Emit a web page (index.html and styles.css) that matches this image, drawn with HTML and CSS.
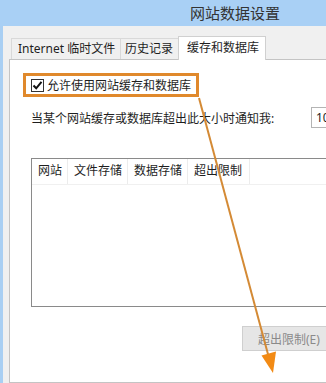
FILE: index.html
```html
<!DOCTYPE html>
<html lang="zh-CN">
<head>
  <meta charset="UTF-8" />
  <meta name="viewport" content="width=device-width, initial-scale=1.0"/>
  <title>网站数据设置</title>
  <link rel="stylesheet" href="styles.css">
</head>
<body>
  <div class="window">
    <div class="titlebar">网站数据设置</div>
    <div class="content">
      <div class="tabs">
        <div class="tab">Internet 临时文件</div>
        <div class="tab">历史记录</div>
        <div class="tab active">缓存和数据库</div>
      </div>
      <div class="panel">
        <label class="highlight">
          <span class="check">
            <svg width="11" height="11" viewBox="0 0 11 11"><path d="M1.5 5.5 L4.2 8.3 L9.5 1.8" fill="none" stroke="#111" stroke-width="2"/></svg>
          </span>
          <span>允许使用网站缓存和数据库</span>
        </label>
        <div class="limit-row">
          <span class="limit-label">当某个网站缓存或数据库超出此大小时通知我:</span>
          <div class="size-input">10</div>
        </div>
        <div class="list">
          <div class="list-head">
            <div class="col col-site">网站</div>
            <div class="col col-file">文件存储</div>
            <div class="col col-data">数据存储</div>
            <div class="col col-over">超出限制</div>
          </div>
        </div>
        <div class="btn-row">
          <button class="btn" disabled>超出限制(E)</button>
        </div>
      </div>
    </div>
  </div>

  <!-- annotation arrow drawn over the dialog -->
  <svg class="arrow" width="326" height="383" viewBox="0 0 326 383">
    <line x1="199" y1="98" x2="269" y2="358" stroke="#d48a35" stroke-width="2"/>
    <polygon points="261.5,355.5 276,351.5 273,373" fill="#f28a14"/>
  </svg>
</body>
</html>
```

FILE: styles.css
```css
body {
  margin: 0;
  width: 326px;
  height: 383px;
  overflow: hidden;
  position: relative;
  font-family: "Noto Sans", "Noto Sans CJK SC", sans-serif;
  font-size: 12px;
  color: #1e1e1e;
  background: #f0f0f0;
  white-space: nowrap;
}
.window {
  height: 383px;
  border-left: 3px solid #a9cff3;
  box-sizing: border-box;
}
.titlebar {
  height: 26px;
  margin-left: -3px;
  padding-left: 190px;
  background: #a9d0f5;
  color: #333;
  font-size: 15px;
  line-height: 26px;
}
.content {
  padding-left: 6px;
  padding-top: 9px;
}
.tabs {
  display: flex;
  align-items: flex-end;
  padding-left: 2px;
  height: 24px;
}
.tab {
  height: 21px;
  line-height: 20px;
  padding: 0 0 0 5px;
  border: 1px solid #d9d9d9;
  border-bottom: none;
  margin-right: -1px;
  background: #f0f0f0;
  box-sizing: border-box;
  overflow: hidden;
}
.tab:first-child { width: 110px; padding-left: 6px; }
.tab:nth-child(2) { width: 59px; padding-left: 4px; }
.tab.active {
  width: 88px;
  height: 24px;
  line-height: 21px;
  padding-left: 8px;
  background: #fff;
  border-color: #d0d0d0;
  position: relative;
  z-index: 1;
  margin-bottom: -1px;
}
.panel {
  height: 324px;
  width: 340px;
  box-sizing: border-box;
  border: 1px solid #c4c4c4;
  border-right: none;
  background: #fff;
  display: flex;
  flex-direction: column;
  align-items: flex-start;
}
.highlight {
  display: flex;
  align-items: center;
  gap: 3px;
  margin: 13px 0 0 13px;
  height: 24px;
  box-sizing: border-box;
  padding: 0 5px;
  border: 3px solid #e0892c;
}
.check {
  width: 13px;
  height: 13px;
  box-sizing: border-box;
  border: 1px solid #333;
  background: #fff;
  display: flex;
  align-items: center;
  justify-content: center;
}
.limit-row {
  display: flex;
  align-items: center;
  margin: 10px 0 0 21px;
  height: 21px;
}
.limit-label {
  width: 280px;
}
.size-input {
  width: 40px;
  height: 21px;
  box-sizing: border-box;
  border: 1px solid #b4b4b4;
  padding-left: 4px;
  line-height: 19px;
}
.list {
  margin: 30px 0 0 21px;
  width: 310px;
  height: 149px;
  box-sizing: border-box;
  border: 1px solid #8a8a8a;
  border-right: none;
}
.list-head {
  display: flex;
  height: 25px;
  border-bottom: 1px solid #f0f0f0;
}
.col {
  padding-left: 6px;
  line-height: 24px;
  border-right: 1px solid #ececec;
  box-sizing: border-box;
}
.col-site { width: 36px; }
.col-file { width: 60px; }
.col-data { width: 60px; }
.col-over { width: 62px; }
.btn-row {
  margin: 19px 0 0 232px;
}
.btn {
  width: 90px;
  height: 25px;
  padding: 0 0 0 15px;
  text-align: left;
  font-family: "Noto Sans", "Noto Sans CJK SC", sans-serif;
  font-size: 12px;
  color: #8a8a8a;
  background: #e6e6e6;
  border: 1px solid #cfcfcf;
}
.arrow {
  position: absolute;
  left: 0;
  top: 0;
}
```
